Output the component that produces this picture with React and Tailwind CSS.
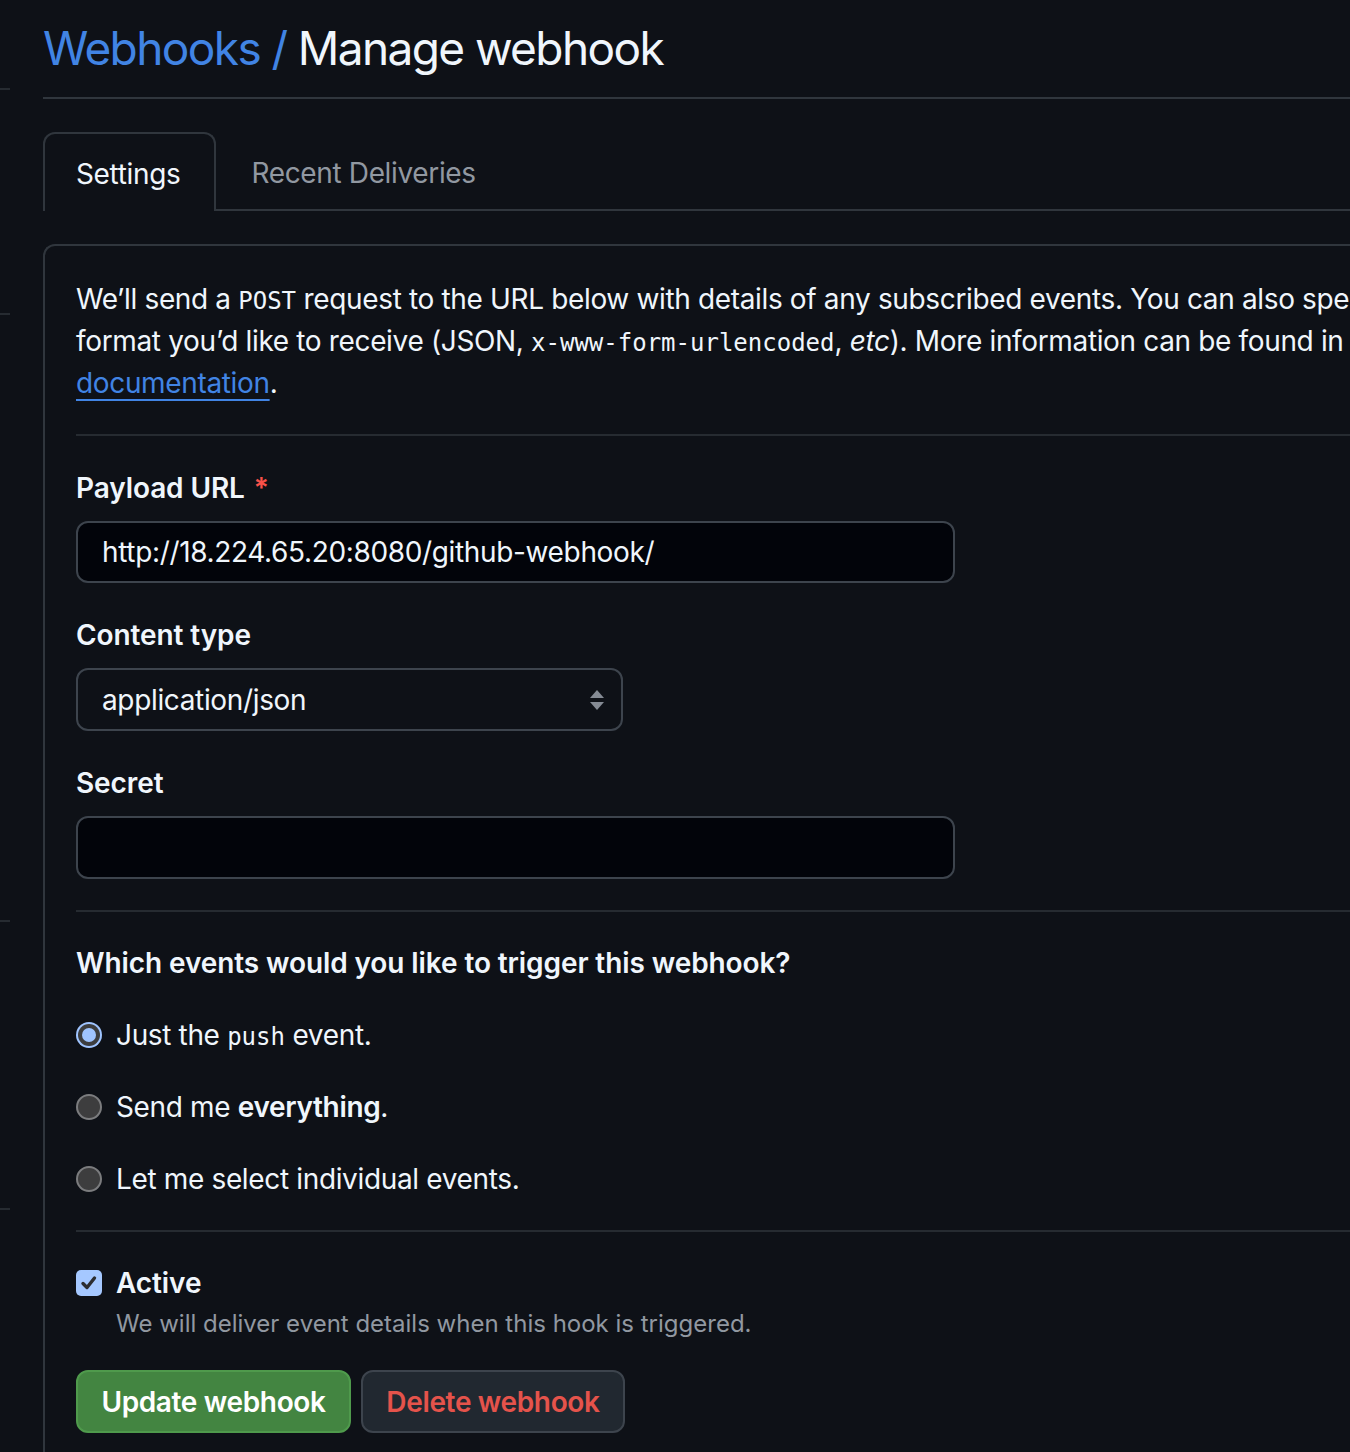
import React from "react";

const mono = "font-['DejaVu_Sans_Mono',monospace] text-[24px] leading-[0] tracking-normal";
const label = "block text-[28px] leading-[42px] font-semibold tracking-[-0.1px]";

function Radio({ checked }) {
  if (checked) {
    return (
      <span className="w-[26px] h-[26px] rounded-full bg-[#9fc4ff] p-[2px] flex shrink-0">
        <span className="flex-1 rounded-full bg-[#3c3d3f] p-[4px] flex">
          <span className="flex-1 rounded-full bg-[#9fc4ff]" />
        </span>
      </span>
    );
  }
  return <span className="w-[26px] h-[26px] rounded-full bg-[#3d3d3e] border-2 border-[#7b7c7e] shrink-0" />;
}

function Checkbox() {
  return (
    <span className="w-[26px] h-[26px] rounded-[5px] bg-[#a5c8ff] flex items-center justify-center shrink-0">
      <svg width="20" height="20" viewBox="0 0 20 20" fill="none">
        <path d="M4 10.5 L8 14.5 L15.5 5" stroke="#2c2d30" strokeWidth="3.4" strokeLinecap="round" strokeLinejoin="round" />
      </svg>
    </span>
  );
}

export default function App() {
  return (
    <div className="w-[1350px] h-[1452px] overflow-hidden bg-[#0e1117] flex font-['Inter',sans-serif] tracking-[-0.35px] text-[#f0f6fc]">
      {/* sidebar edge */}
      <div className="w-[10px] shrink-0 flex flex-col">
        <div className="h-[90px] border-b-2 border-[#262b31]" />
        <div className="h-[225px] border-b-2 border-[#262b31]" />
        <div className="h-[607px] border-b-2 border-[#262b31]" />
        <div className="h-[288px] border-b-2 border-[#262b31]" />
      </div>

      <main className="ml-[33px] w-[1500px] shrink-0">
        {/* Title */}
        <div className="h-[99px] pt-[18px] border-b-2 border-[#30363d]">
          <h1 className="text-[46px] leading-[60px] tracking-[-1.6px]">
            <span className="text-[#4184e4]">Webhooks /</span> Manage webhook
          </h1>
        </div>

        {/* Tabs */}
        <div className="mt-[33px] flex items-end h-[79px] text-[28px]">
          <div className="h-[79px] pl-[31px] pr-[34px] pt-[3px] flex items-center border-2 border-b-0 border-[#30363d] rounded-t-[12px]">
            Settings
          </div>
          <div className="flex-1 h-full flex items-center pt-[4px] px-[35px] border-b-2 border-[#30363d] text-[#9198a1]">
            Recent Deliveries
          </div>
        </div>

        {/* Form box */}
        <div className="mt-[33px] border-2 border-r-0 border-b-0 border-[#30363d] rounded-tl-[12px] pl-[31px] pt-[32px] h-[1300px]">
          <div className="text-[28px] leading-[42px] whitespace-nowrap">
            <p>
              We’ll send a <code className={mono}>POST</code> request to the URL below with details of any subscribed events. You can also specify which data
            </p>
            <p>
              format you’d like to receive (JSON, <code className={mono}>x-www-form-urlencoded</code>, <em>etc</em>). More information can be found in our developer
            </p>
            <p>
              <a className="text-[#4184e4] underline decoration-2 underline-offset-[6px]">documentation</a>.
            </p>
          </div>

          <div className="mt-[30px] border-t-2 border-[#262b31]" />

          {/* Payload URL */}
          <label className={`mt-[31px] ${label}`}>
            Payload URL <span className="text-[#f85149] ml-[2px]">*</span>
          </label>
          <div className="mt-[12px] w-[879px] h-[62px] rounded-[12px] border-2 border-[#3d444d] bg-[#02040a] flex items-center px-[24px] text-[28px]">
            http://18.224.65.20:8080/github-webhook/
          </div>

          {/* Content type */}
          <label className={`mt-[31px] ${label}`}>Content type</label>
          <div className="mt-[12px] w-[547px] h-[63px] rounded-[12px] border-2 border-[#3d444d] flex items-center justify-between pl-[24px] pr-[16px] text-[28px]">
            <span>application/json</span>
            <svg width="16" height="22" viewBox="0 0 16 22">
              <path d="M8 1 L15 9 L1 9 Z" fill="#858b94" />
              <path d="M1 13 L15 13 L8 21 Z" fill="#858b94" />
            </svg>
          </div>

          {/* Secret */}
          <label className={`mt-[31px] ${label}`}>Secret</label>
          <div className="mt-[12px] w-[879px] h-[63px] rounded-[12px] border-2 border-[#3d444d] bg-[#02040a]" />

          <div className="mt-[31px] border-t-2 border-[#262b31]" />

          {/* Events */}
          <h3 className={`mt-[30px] ${label}`}>
            Which events would you like to trigger this webhook?
          </h3>
          <div className="mt-[30px] flex flex-col gap-[30px] text-[28px]">
            <div className="h-[42px] flex items-center gap-[14px]">
              <Radio checked />
              <span>
                Just the <code className={mono}>push</code> event.
              </span>
            </div>
            <div className="h-[42px] flex items-center gap-[14px]">
              <Radio />
              <span>
                Send me <strong className="font-semibold">everything</strong>.
              </span>
            </div>
            <div className="h-[42px] flex items-center gap-[14px]">
              <Radio />
              <span>Let me select individual events.</span>
            </div>
          </div>

          <div className="mt-[30px] border-t-2 border-[#262b31]" />

          {/* Active */}
          <div className="mt-[30px] h-[42px] flex items-center gap-[14px]">
            <Checkbox />
            <span className="text-[28px] font-semibold tracking-[-0.1px]">Active</span>
          </div>
          <p className="mt-[2px] ml-[40px] text-[24px] leading-[36px] tracking-normal text-[#9198a1]">
            We will deliver event details when this hook is triggered.
          </p>

          {/* Buttons */}
          <div className="mt-[28px] flex gap-[10px]">
            <button className="w-[275px] h-[63px] rounded-[12px] bg-[#438541] border-2 border-[#4f9a4c] text-white text-[28px] font-semibold">
              Update webhook
            </button>
            <button className="w-[264px] h-[63px] rounded-[12px] bg-[#212830] border-2 border-[#3d444d] text-[#e5534b] text-[28px] font-semibold">
              Delete webhook
            </button>
          </div>
        </div>
      </main>
    </div>
  );
}
